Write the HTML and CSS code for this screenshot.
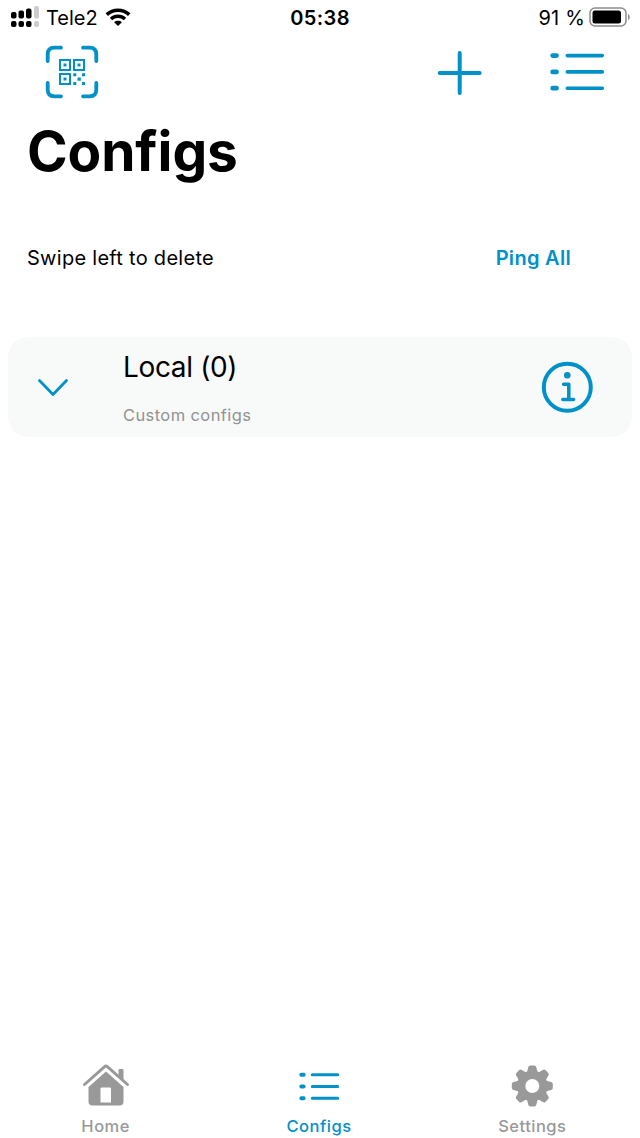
FILE: index.html
```html
<!DOCTYPE html>
<html lang="en">
<head>
<meta charset="utf-8">
<title>Configs</title>
<link rel="stylesheet" href="styles.css">
</head>
<body>
<div class="screen">
  <header class="status">
    <div class="carrier">
      <svg width="30" height="22" viewBox="0 0 30 22">
        <g fill="#000"><rect x="1" y="6" width="5.5" height="6.5" rx="2"/><rect x="8.5" y="4.500" width="5.5" height="8" rx="2"/><rect x="16" y="2.500" width="5.5" height="10" rx="2"/><rect x="1" y="15" width="5.5" height="6" rx="2"/><rect x="8.500" y="15" width="5.5" height="6" rx="2"/><rect x="16" y="15" width="5.5" height="6" rx="2"/></g>
        <g fill="#ccc"><rect x="24" y="0" width="5" height="12.500" rx="2"/><rect x="24" y="15" width="5" height="6" rx="2"/></g>
      </svg>
      <span class="carrier-name">Tele2</span>
      <svg class="wifi" width="26" height="20" viewBox="0 0 26 20">
        <path d="M1.800 7.600C8 1.800 18 1.800 24.200 7.600" fill="none" stroke="#000" stroke-width="3.600"/>
        <path d="M6 12C10 8.300 16 8.300 20 12" fill="none" stroke="#000" stroke-width="3.400"/>
        <path d="M9.100 15.200C11.300 13.300 14.700 13.300 16.900 15.200L13 19Z" fill="#000"/>
      </svg>
    </div>
    <span class="time">05:38</span>
    <div class="power">
      <span class="percent">91 %</span>
      <svg width="42" height="20" viewBox="0 0 42 20">
        <rect x="1" y="1" width="36" height="18" rx="5" fill="none" stroke="#8c8c8c" stroke-width="1.500"/>
        <rect x="3.500" y="3.500" width="28.500" height="13" rx="2.500" fill="#000"/>
        <path d="M39 7C41.300 8 41.300 12 39 13Z" fill="#8c8c8c"/>
      </svg>
    </div>
  </header>

  <nav class="toolbar">
    <svg class="scan" width="54" height="54" viewBox="0 0 54 54" fill="none" stroke="#0091c9">
      <path d="M2.700 16V9.500Q2.700 2.700 9.500 2.700H16M38 2.700H44.500Q51.300 2.700 51.300 9.500V16M51.300 38V44.500Q51.300 51.300 44.500 51.300H38M16 51.300H9.500Q2.700 51.300 2.700 44.500V38" stroke-width="3.800" stroke-linecap="round"/>
      <path d="M15 15H25V25H15ZM29 15H39V25H29ZM15 29H25V39H15Z" stroke-width="2"/>
      <path d="M18.500 18.500h3v3h-3zM32.500 18.500h3v3h-3zM18.500 32.500h3v3h-3zM28.300 28.300h3v3h-3zM37 28.300h3v3h-3zM32.500 32.500h3.300v3.300h-3.300zM28.300 37h3v3h-3zM37 37h3v3h-3z" fill="#0091c9" stroke="none"/>
    </svg>
    <svg class="add" width="46" height="46" viewBox="0 0 46 46" fill="none" stroke="#0091c9" stroke-width="4" stroke-linecap="round"><path d="M22.700 3V43M2.700 23H42.700"/></svg>
    <svg class="menu" width="56" height="42" viewBox="0 0 56 42" fill="none" stroke="#0091c9" stroke-linecap="round">
      <path d="M2.700 4.600H6.500M2.700 20.900H6.500M2.700 37.200H6.500" stroke-width="4.800"/>
      <path d="M17.300 4.600H52.300M17.300 20.900H52.300M17.300 37.200H52.300" stroke-width="3.600"/>
    </svg>
  </nav>

  <h1 class="title">Configs</h1>

  <div class="actions">
    <span class="hint">Swipe left to delete</span>
    <span class="ping">Ping All</span>
  </div>

  <section class="card">
    <svg class="chevron" width="32" height="20" viewBox="0 0 32 20" fill="none" stroke="#0091c9" stroke-width="2.800" stroke-linecap="round" stroke-linejoin="round"><path d="M2.500 3.600L16 17.400L29.500 3.600"/></svg>
    <div class="card-text">
      <span class="card-title">Local (0)</span>
      <span class="card-sub">Custom configs</span>
    </div>
    <svg class="info" width="52" height="52" viewBox="0 0 52 52" fill="none" stroke="#0091c9" stroke-linecap="round" stroke-linejoin="round">
      <circle cx="26.300" cy="26.300" r="23.500" stroke-width="4"/>
      <circle cx="26.300" cy="14.200" r="3.300" fill="#0091c9" stroke="none"/>
      <path d="M22.600 23.200H27.800V38.400M21.800 38.400H32.600" stroke-width="3.500"/>
    </svg>
  </section>

  <footer class="tabs">
    <div class="tab">
      <svg width="48" height="44" viewBox="0 0 48 44">
        <path d="M2.500 21.500L22.400 3.800Q24 2.400 25.600 3.800L45.500 21.500" fill="none" stroke="#999" stroke-width="2.900" stroke-linecap="round"/>
        <path d="M36.500 7Q36.500 6 37.500 6H40.500Q41.500 6 41.500 7V17L36.500 12.500Z" fill="#999"/>
        <path fill-rule="evenodd" d="M24 8.500L41.500 24V38.500Q41.500 42.500 37.500 42.500H10.500Q6.500 42.500 6.500 38.500V24ZM19.500 24.500Q18.500 24.500 18.500 25.500V39.500H29V25.500Q29 24.500 28 24.500Z" fill="#999"/>
      </svg>
      <span>Home</span>
    </div>
    <div class="tab active">
      <svg width="48" height="44" viewBox="0 0 48 44" fill="none" stroke="#0091c9" stroke-linecap="round">
        <path d="M6.300 11.700H8.700M6.300 23.500H8.700M6.300 35.300H8.700" stroke-width="3.900"/>
        <path d="M17.300 11.700H42.700M17.300 23.500H42.700M17.300 35.300H42.700" stroke-width="3.100"/>
      </svg>
      <span>Configs</span>
    </div>
    <div class="tab">
      <svg width="48" height="44" viewBox="-24.300 -23 48 44">
        <defs><path id="tooth" d="M-5.500-13L-4-18.800Q-3.600-20.500-2-20.500H2Q3.600-20.500 4-18.800L5.500-13V13L4 18.800Q3.600 20.500 2 20.500H-2Q-3.600 20.500-4 18.800L-5.500 13Z"/></defs>
        <g fill="#999"><circle r="15.300"/><use href="#tooth"/><use href="#tooth" transform="rotate(45)"/><use href="#tooth" transform="rotate(90)"/><use href="#tooth" transform="rotate(135)"/></g>
        <circle r="7" fill="#fff"/>
      </svg>
      <span>Settings</span>
    </div>
  </footer>
</div>
</body>
</html>
```
FILE: styles.css
```css
* { box-sizing: border-box; }
body {
  margin: 0;
  background: #fff;
  color: #000;
  font-family: Inter, "Liberation Sans", sans-serif;
}
svg { display: block; flex: none; }
.screen {
  display: flex;
  flex-direction: column;
  width: 640px;
  height: 1138px;
}
.status {
  display: grid;
  grid-template-columns: 1fr auto 1fr;
  height: 36px;
  padding: 0 10px;
  font-size: 20px;
  line-height: 36px;
  white-space: nowrap;
}
.carrier, .power { display: flex; align-items: flex-start; }
.carrier svg { margin-top: 6px; }
.carrier-name { width: 52px; margin-left: 6px; letter-spacing: 0; }
.carrier .wifi { margin: 7px 0 0 7px; }
.time { font-weight: 600; letter-spacing: 0.4px; }
.power { justify-content: flex-end; margin-right: -1px; }
.power svg { margin: 7px 0 0 4px; }
.percent { letter-spacing: 0.2px; }
.toolbar {
  display: flex;
  align-items: flex-start;
  height: 72px;
  padding: 9px 34px 0 45px;
}
.add { margin: 5px 67px 0 auto; }
.menu { margin-top: 6px; }
.title {
  height: 84px;
  margin: 0;
  padding: 7px 0 0 27px;
  font-size: 55px;
  line-height: 72px;
  font-weight: 700;
  letter-spacing: -0.1px;
}
.actions {
  display: flex;
  justify-content: space-between;
  height: 145px;
  padding: 51px 69px 0 27px;
  font-size: 20px;
  line-height: 30px;
}
.hint { letter-spacing: 0.28px; }
.ping { color: #0091c9; font-weight: 600; letter-spacing: 0.3px; }
.card {
  display: flex;
  height: 100px;
  margin: 0 8px;
  padding: 0 39px 0 29px;
  border-radius: 20px;
  background: #f8faf9;
}
.chevron { margin-top: 40px; }
.card-text { display: flex; flex: 1; flex-direction: column; padding: 10px 0 0 54px; }
.card-title { font-size: 28px; line-height: 40px; letter-spacing: -0.35px; }
.card-sub { margin-top: 16px; color: #929292; font-size: 16.5px; line-height: 24px; letter-spacing: 0.4px; }
.info { margin-top: 24px; }
.tabs {
  display: grid;
  grid-template-columns: repeat(3, 1fr);
  height: 75px;
  margin: auto 1px 0 -1px;
}
.tab {
  display: flex;
  flex-direction: column;
  align-items: center;
  color: #999;
  font-size: 16.5px;
  line-height: 24px;
  font-weight: 500;
  letter-spacing: 0.5px;
}
.tab span { margin-top: 7px; }
.active { color: #0091c9; }
```
